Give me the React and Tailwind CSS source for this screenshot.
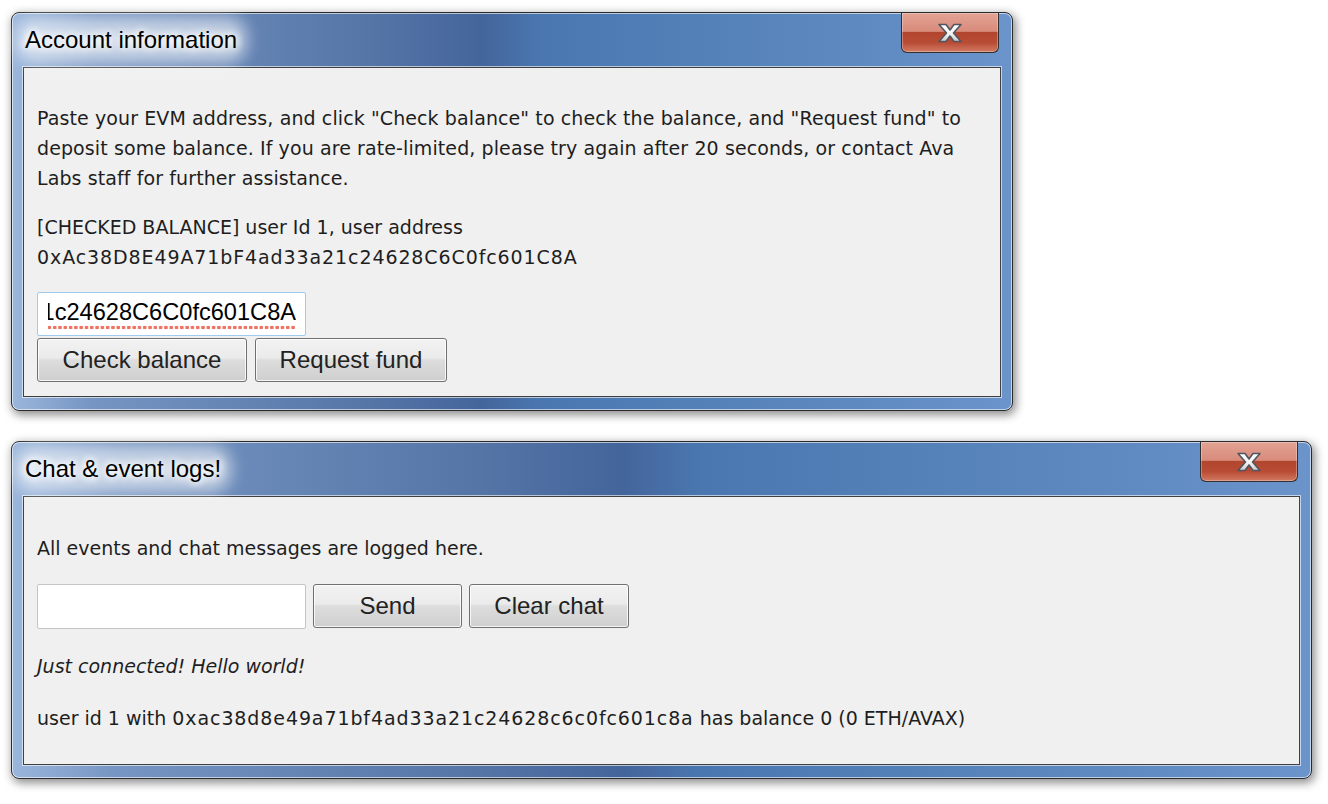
import React from "react";

function CloseButton() {
  return (
    <div className="flex h-[40px] w-[98px] shrink-0 items-center justify-center self-start rounded-b-[6px] border border-t-0 border-[#303030] bg-[linear-gradient(180deg,#e3a393_0%,#d88b7b_47%,#b2452e_50%,#b94c35_76%,#d27a63_100%)] shadow-[inset_0_0_0_1px_rgba(255,255,255,0.3)]">
      <svg width="26" height="20" viewBox="0 0 26 20">
        <defs>
          <linearGradient id="xg" x1="0" y1="0" x2="0" y2="1">
            <stop offset="0" stopColor="#ffffff" />
            <stop offset="0.55" stopColor="#f4f4f4" />
            <stop offset="1" stopColor="#c8c8c8" />
          </linearGradient>
        </defs>
        <polygon
          points="2,1.5 9,1.5 13,7 17,1.5 24,1.5 16.5,10 24,18.5 17,18.5 13,13 9,18.5 2,18.5 9.5,10"
          fill="url(#xg)"
          stroke="#505560"
          strokeWidth="1.6"
          strokeLinejoin="round"
        />
      </svg>
    </div>
  );
}

function Win({ width, title, bodyClass, children }) {
  return (
    <div
      className={`relative ${width} rounded-[8px] border border-[#2b2b2b] bg-[linear-gradient(90deg,#9ab6dc_0%,#7695c2_8%,#6585b5_22%,#5575a7_36%,#44659b_47%,#4a77b0_53%,#5480b8_68%,#5d88c0_84%,#6b94cb_100%)] shadow-[2px_3px_10px_1px_rgba(0,0,0,0.45),inset_0_0_0_1px_rgba(255,255,255,0.6)]`}
    >
      <div className="flex h-[54px] items-center justify-between pl-[13px] pr-[13px]">
        <div className="relative self-center">
          <div className="absolute -inset-x-[10px] -inset-y-[8px] rounded-[20px] bg-white/60 blur-[8px]" />
          <span className="relative font-['Liberation_Sans',Arial,sans-serif] text-[24px] leading-[30px] text-black [text-shadow:0_0_8px_#fff,0_0_8px_#fff,0_0_8px_#fff]">
            {title}
          </span>
        </div>
        <CloseButton />
      </div>
      <div
        className={`mx-[11px] mb-[13px] border border-[#404040] bg-[#f0f0f0] px-[13px] shadow-[0_0_0_1px_rgba(255,255,255,0.6)] font-['DejaVu_Sans',sans-serif] text-[19px] leading-[30px] text-[#1e1e1e] ${bodyClass}`}
      >
        {children}
      </div>
    </div>
  );
}

function Btn({ children, className = "" }) {
  return (
    <button
      className={`flex h-[44px] items-center justify-center whitespace-nowrap rounded-[3px] border border-[#707070] bg-[linear-gradient(180deg,#f2f2f2_0%,#ebebeb_45%,#dddddd_50%,#cfcfcf_100%)] px-0 font-['Liberation_Sans',Arial,sans-serif] text-[24px] text-[#222] shadow-[inset_0_0_0_1px_rgba(255,255,255,0.8)] ${className}`}
    >
      {children}
    </button>
  );
}

export default function App() {
  const addr = "0xAc38D8E49A71bF4ad33a21c24628C6C0fc601C8A";
  return (
    <div className="min-h-screen w-full bg-white pl-[11px] pt-[12px]">
      <div className="flex flex-col gap-[30px]">
        <Win width="w-[1002px]" title="Account information" bodyClass="pt-[35px] pb-[14px]">
          <p className="tracking-[0.1px]">
            Paste your EVM address, and click "Check balance" to check the balance, and "Request fund" to
            deposit some balance. If you are rate-limited, please try again after 20 seconds, or contact Ava
            Labs staff for further assistance.
          </p>
          <p className="mt-[19px]">
            [CHECKED BALANCE] user Id 1, user address
            <br />
            <span className="tracking-[0.9px]">{addr}</span>
          </p>
          <div className="mt-[20px] flex h-[44px] w-[269px] items-center rounded-[2px] border border-[#9fcbee] bg-white pl-[10px] pr-[9px]">
            <div className="flex min-w-0 flex-1 justify-end overflow-hidden">
              <span className="whitespace-nowrap bg-[radial-gradient(circle,#f07262_1.6px,transparent_2.1px)] bg-[length:5.3px_5px] bg-bottom bg-repeat-x pb-[4px] font-['Liberation_Sans',Arial,sans-serif] text-[23.6px] leading-[28px] text-black">
                {addr}
              </span>
            </div>
          </div>
          <div className="mt-[2px] flex gap-[8px]">
            <Btn className="h-[43px] w-[210px]">Check balance</Btn>
            <Btn className="h-[43px] w-[192px]">Request fund</Btn>
          </div>
        </Win>

        <Win width="w-[1301px]" title="Chat & event logs!" bodyClass="pt-[36px] pb-[31px]">
          <p>All events and chat messages are logged here.</p>
          <div className="mt-[20px] flex h-[46px] items-center gap-[7px]">
            <div className="h-[45px] w-[269px] rounded-[2px] border border-[#c4c4c4] bg-white" />
            <Btn className="w-[149px]">Send</Btn>
            <Btn className="w-[160px]">Clear chat</Btn>
          </div>
          <p className="mt-[22px] italic">Just connected! Hello world!</p>
          <p className="mt-[22px]">
            user id 1 with{" "}
            <span className="tracking-[0.9px]">0xac38d8e49a71bf4ad33a21c24628c6c0fc601c8a</span> has balance 0
            (0 ETH/AVAX)
          </p>
        </Win>
      </div>
    </div>
  );
}
